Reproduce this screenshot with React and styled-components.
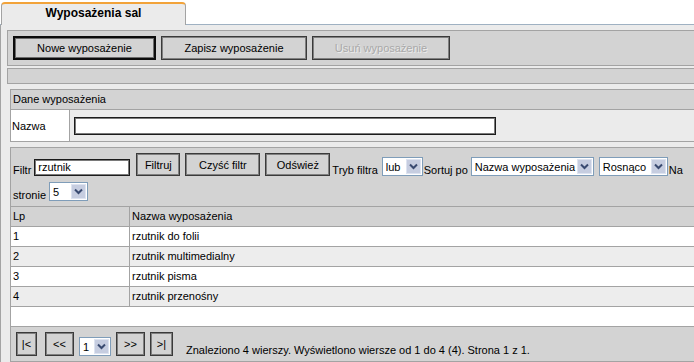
import React from 'react';
import styled, { createGlobalStyle } from 'styled-components';

const GlobalStyle = createGlobalStyle`
  html, body {
    margin: 0;
    padding: 0;
    background: #fff;
    overflow: hidden;
  }
  body {
    font-family: "Liberation Sans", Arial, sans-serif;
    font-size: 11px;
    color: #000;
  }
`;

const Page = styled.div`
  width: 100%;
`;

const TabStrip = styled.div`
  height: 25px;
  box-sizing: border-box;
  border-bottom: 1px solid #9fb1c2;
  display: flex;
  align-items: flex-end;
  padding-left: 1px;
`;

const Tab = styled.div`
  width: 185px;
  height: 23px;
  box-sizing: border-box;
  margin-bottom: -1px;
  background: #ebebeb;
  border: 1px solid #a3a3a3;
  border-top: 2px solid #f2a33a;
  border-bottom: none;
  border-radius: 4px 4px 0 0;
  font-size: 12px;
  font-weight: bold;
  display: flex;
  align-items: center;
  justify-content: center;
  padding-bottom: 3px;
`;

const Panel = styled.div`
  background: #ebebeb;
  border-left: 1px solid #a3a3a3;
  padding: 5px 0 0 6px;
  display: flex;
  flex-direction: column;
`;

const Toolbar = styled.div`
  background: #d3d3d3;
  border: 1px solid #a3a3a3;
  border-right: none;
  padding: 5px;
  display: flex;
  gap: 5px;
`;

const StatusBar = styled.div`
  margin-top: 2px;
  height: 14px;
  background: #d3d3d3;
  border: 1px solid #a3a3a3;
  border-right: none;
`;

const Button = styled.button`
  width: ${p => p.$w}px;
  height: ${p => p.$h || 24}px;
  box-sizing: border-box;
  flex: none;
  padding: 0;
  background: #d3d3d3;
  font-family: inherit;
  font-size: 11px;
  color: ${p => (p.disabled ? '#a9a9a9' : '#000')};
  text-shadow: ${p => (p.disabled ? '1px 1px 0 #ececec' : 'none')};
  border: ${p => (p.$primary ? '2px solid #0c0c0c' : '1px solid #3a3a3a')};
  box-shadow: inset 0 0 0 1px ${p => (p.$primary ? '#6c6c6c' : '#808080')};
  display: flex;
  align-items: center;
  justify-content: center;
`;

const Section = styled.div`
  margin-left: 3px;
  margin-top: ${p => p.$top || 0}px;
  border: 1px solid #a3a3a3;
  border-right: none;
  border-bottom: ${p => (p.$open ? 'none' : '1px solid #a3a3a3')};
`;

const SectionHead = styled.div`
  height: 19px;
  line-height: 19px;
  padding-left: 2px;
  background: #d3d3d3;
  border-bottom: 1px solid #a3a3a3;
`;

const FormRow = styled.div`
  display: flex;
  height: 31px;
`;

const FormLabel = styled.div`
  width: 57px;
  background: #fff;
  border-right: 1px solid #a3a3a3;
  padding-left: 1px;
  display: flex;
  align-items: center;
`;

const FormField = styled.div`
  flex: 1;
  padding-left: 4px;
  display: flex;
  align-items: center;
`;

const TextInput = styled.div`
  width: ${p => p.$w}px;
  height: ${p => p.$h}px;
  box-sizing: border-box;
  flex: none;
  background: #fff;
  border: 1px solid #1c1c1c;
  box-shadow: inset 0 0 0 1px #7a7a7a;
  padding: 0 3px;
  line-height: ${p => p.$h - 2}px;
`;

const FilterBox = styled.div`
  background: #d3d3d3;
  padding: 5px 2px 5px;
  display: flex;
  flex-direction: column;
  gap: 6px;
`;

const FilterLine = styled.div`
  display: flex;
  align-items: flex-end;
`;

const Label = styled.span`
  line-height: 12px;
  margin-left: ${p => p.$ml || 0}px;
  white-space: nowrap;
`;

const Gap = styled.span`
  width: ${p => p.$w}px;
  flex: none;
`;

const SelectBox = styled.div`
  width: ${p => p.$w}px;
  height: 19px;
  box-sizing: border-box;
  flex: none;
  background: #fff;
  border: 1px solid #7f9db9;
  display: flex;
  align-items: center;
  padding: 0 1px 0 3px;
`;

const SelectText = styled.span`
  flex: 1;
  white-space: nowrap;
  overflow: hidden;
`;

const SelectArrow = styled.span`
  width: 15px;
  height: 15px;
  box-sizing: border-box;
  background: #c6cde0;
  border: 1px solid #dde3f0;
  display: flex;
  align-items: center;
  justify-content: center;
`;

const Table = styled.div`
  margin-left: 3px;
  border-top: 1px solid #a3a3a3;
  border-left: 1px solid #a3a3a3;
  background: #fff;
`;

const Row = styled.div`
  display: flex;
  height: 19px;
  line-height: 19px;
  border-bottom: ${p => (p.$last ? 'none' : '1px solid #a3a3a3')};
  background: ${p => p.$bg};
`;

const Cell = styled.div`
  width: ${p => (p.$w ? `${p.$w}px` : 'auto')};
  flex: ${p => (p.$w ? 'none' : 1)};
  padding-left: 2px;
  box-sizing: border-box;
  border-right: ${p => (p.$w ? '1px solid #a3a3a3' : 'none')};
  white-space: nowrap;
`;

const Pager = styled.div`
  margin-left: 3px;
  border: 1px solid #a3a3a3;
  border-right: none;
  background: #d3d3d3;
  padding: 5px;
  display: flex;
  align-items: flex-end;
`;

const Chevron = () => (
  <svg width="9" height="7" viewBox="0 0 9 7">
    <polyline points="1,1.5 4.5,5 8,1.5" fill="none" stroke="#394a70" strokeWidth="2" />
  </svg>
);

const Select = ({ w, value }) => (
  <SelectBox $w={w}>
    <SelectText>{value}</SelectText>
    <SelectArrow>
      <Chevron />
    </SelectArrow>
  </SelectBox>
);

const rows = [
  ['1', 'rzutnik do folii'],
  ['2', 'rzutnik multimedialny'],
  ['3', 'rzutnik pisma'],
  ['4', 'rzutnik przenośny'],
];

export default function App() {
  return (
    <Page>
      <GlobalStyle />
      <TabStrip>
        <Tab>Wyposażenia sal</Tab>
      </TabStrip>
      <Panel>
        <Toolbar>
          <Button $w={143} $primary>Nowe wyposażenie</Button>
          <Button $w={146}>Zapisz wyposażenie</Button>
          <Button $w={138} disabled>Usuń wyposażenie</Button>
        </Toolbar>
        <StatusBar />

        <Section $top={5}>
          <SectionHead>Dane wyposażenia</SectionHead>
          <FormRow>
            <FormLabel>Nazwa</FormLabel>
            <FormField>
              <TextInput $w={422} $h={18} />
            </FormField>
          </FormRow>
        </Section>

        <Section $top={5} $open>
          <FilterBox>
            <FilterLine>
              <Label>Filtr</Label>
              <Gap $w={3} />
              <TextInput $w={96} $h={17}>rzutnik</TextInput>
              <Gap $w={6} />
              <Button $w={44} $h={23}>Filtruj</Button>
              <Gap $w={5} />
              <Button $w={75} $h={23}>Czyść filtr</Button>
              <Gap $w={5} />
              <Button $w={65} $h={23}>Odśwież</Button>
              <Label $ml={2}>Tryb filtra</Label>
              <Gap $w={4} />
              <Select w={41} value="lub" />
              <Label $ml={1}>Sortuj po</Label>
              <Gap $w={3} />
              <Select w={123} value="Nazwa wyposażenia" />
              <Gap $w={5} />
              <Select w={69} value="Rosnąco" />
              <Label $ml={1}>Na</Label>
            </FilterLine>
            <FilterLine>
              <Label>stronie</Label>
              <Gap $w={3} />
              <Select w={39} value="5" />
            </FilterLine>
          </FilterBox>
        </Section>

        <Table>
          <Row $bg="#d3d3d3">
            <Cell $w={119}>Lp</Cell>
            <Cell>Nazwa wyposażenia</Cell>
          </Row>
          {rows.map(([lp, name], i) => (
            <Row key={lp} $bg={i % 2 ? '#ededed' : '#fff'}>
              <Cell $w={119}>{lp}</Cell>
              <Cell>{name}</Cell>
            </Row>
          ))}
          <Row $bg="#fff" $last />
        </Table>

        <Pager>
          <Button $w={21}>|&lt;</Button>
          <Gap $w={8} />
          <Button $w={29}>&lt;&lt;</Button>
          <Gap $w={5} />
          <Select w={32} value="1" />
          <Gap $w={5} />
          <Button $w={29}>&gt;&gt;</Button>
          <Gap $w={5} />
          <Button $w={23}>&gt;|</Button>
          <Label $ml={13}>Znaleziono 4 wierszy. Wyświetlono wiersze od 1 do 4 (4). Strona 1 z 1.</Label>
        </Pager>
      </Panel>
    </Page>
  );
}
